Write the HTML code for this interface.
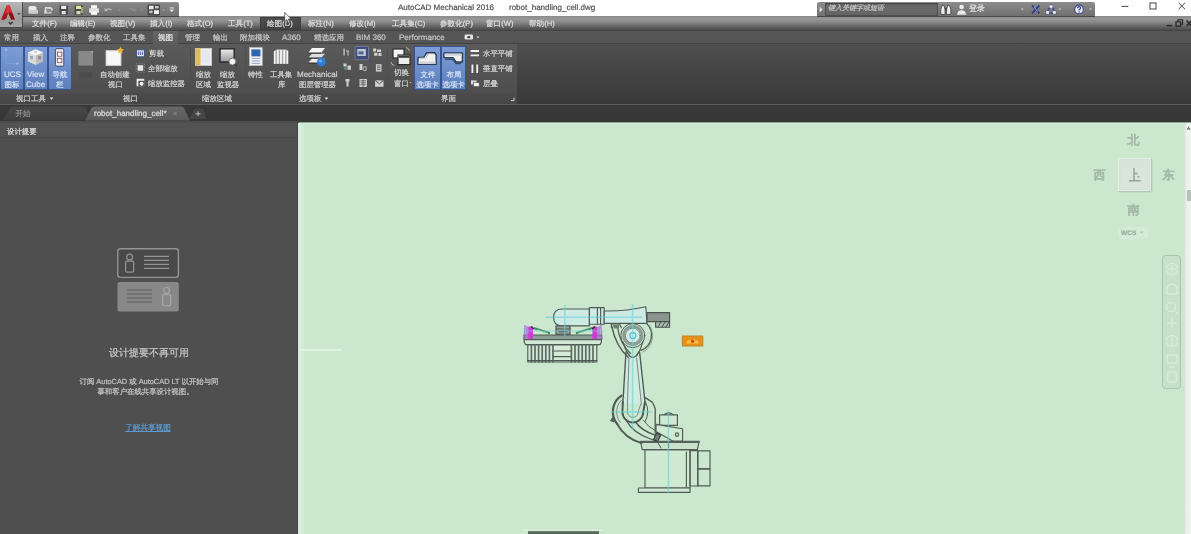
<!DOCTYPE html>
<html lang="zh">
<head>
<meta charset="utf-8">
<title>AutoCAD Mechanical 2016 - robot_handling_cell.dwg</title>
<style>
*{box-sizing:border-box;margin:0;padding:0}
html,body{width:1191px;height:534px;overflow:hidden;background:#cbe8ce}
body{font-family:"Liberation Sans",sans-serif;font-size:8px;color:#d6d6d6;position:relative;text-rendering:geometricPrecision}
.abs{position:absolute}
.t{position:absolute;white-space:nowrap;line-height:10px;filter:blur(.45px);opacity:.92;-webkit-text-stroke:.22px currentColor}
svg.abs{filter:blur(.4px)}
#robot{filter:blur(.55px)}
#titlebar{left:0;top:0;width:1191px;height:16px;background:#fefefe}
#appbtn{left:0;top:2px;width:23px;height:26px;background:linear-gradient(#b6b6b6,#a6a6a6 45%,#9c9c9c 75%,#a6a6a6);border-right:1.5px solid #4a4a4a;border-bottom:1px solid #4a4a4a}
#qat{left:23px;top:2px;width:156px;height:15px;background:linear-gradient(#878787,#7b7b7b 55%,#707070);border-radius:0 2px 0 0;border-top:1px solid #959595;border-bottom:1px solid #444}
#menubar{left:0;top:16px;width:1191px;height:15px;background:linear-gradient(#8a8a8a 0%,#979797 22%,#8b8b8b 40%,#767676 60%,#5e5e5e 82%,#4b4b4b 100%);border-bottom:1px solid #444}
#tabrow{left:0;top:31px;width:1191px;height:13px;background:linear-gradient(#565656,#555);border-bottom:1px solid #434343}
#ribbon{left:0;top:44px;width:1191px;height:49px;background:linear-gradient(#5a5a5a,#535353 55%,#4e4e4e)}
#ribbonR{left:517px;top:44px;width:674px;height:60px;background:linear-gradient(#4f4f4f,#454545 45%,#3d3d3d 80%,#3a3a3a)}
#ptitles{left:0;top:93px;width:517px;height:11px;background:linear-gradient(#4b4b4b,#464646)}
#filetabs{left:0;top:104px;width:1191px;height:18px;background:linear-gradient(#383838,#373737 75%,#343a35);border-top:1px solid #5c5c5c}
#leftpanel{left:0;top:121px;width:299px;height:413px;background:#4f4f4f}
#lphead{left:0;top:121px;width:298px;height:17px;background:linear-gradient(#545454,#505050);border-bottom:1px solid #4a4a4a}
#canvas{left:298px;top:122px;width:893px;height:412px;background:linear-gradient(#6f8273,#d3ead6 1.5px,#d0e9d4 3px,#cbe8ce 5px)}
</style>
</head>
<body>
<div class="abs" id="titlebar"></div>
<div class="abs" id="menubar"></div>
<div class="abs" id="appbtn"></div>
<div class="abs" id="qat"></div>
<div class="abs" id="tabrow"></div>
<div class="abs" id="ribbon"></div>
<div class="abs" id="ribbonR"></div>
<div class="abs" id="ptitles"></div>
<div class="abs" id="filetabs"></div>
<div class="abs" id="leftpanel"></div>
<div class="abs" id="lphead"></div>
<div class="abs" id="canvas"></div>

<!-- ===== title bar ===== -->
<div class="t" style="left:398px;top:2.5px;color:#484848;font-size:8px">AutoCAD Mechanical 2016</div>
<div class="t" style="left:509px;top:2.5px;color:#484848;font-size:8px">robot_handling_cell.dwg</div>

<!-- app button logo -->
<svg class="abs" style="left:0;top:0" width="23" height="28" viewBox="0 0 23 28">
  <path d="M6.8 5.4 L9.6 5.4 L14.8 19.4 L11.2 19.4 L8.4 13 L6.2 18.2 L2.8 20.2 L1.2 19.2 Z" fill="#b4161c"/>
  <path d="M6.8 5.4 L9.6 5.4 L11.6 11 L8.4 13 L5.2 13.4 Z" fill="#d4343a"/>
  <path d="M8.4 13 L11.2 19.4 L14.8 19.4 L12.8 14 Z" fill="#8a0f18"/>
  <path d="M2.8 20.2 L6.2 18.2 L7.2 15.6 L4.4 17.2 Z" fill="#9a1219"/>
  <path d="M8.8 22 l1.9 2.2 l1.9 -2.2" stroke="#2a2a2a" stroke-width="1.2" fill="none"/>
  <path d="M17.4 13.2 h3 l-1.5 1.8 z" fill="#2a2a2a"/>
</svg>

<!-- quick access toolbar icons -->
<svg class="abs" style="left:23px;top:2px" width="156" height="15" viewBox="0 0 156 15">
  <g fill="#e8e8e8">
    <path d="M7 4 h5 l1.5 1.5 v6 h-8 v-6.5 z"/>
    <rect x="6.3" y="8" width="8.8" height="3.6" fill="#cfcfcf"/>
    <path d="M22 5 h6 l2 2 -2 4.5 h-7 z" fill="#d8d8d8"/>
    <path d="M23 6.5 l5 .5 1 3 -5 .8z" fill="#8a8a8a"/>
    <rect x="36.5" y="3.2" width="8.5" height="9.6" rx="1" fill="#4a4a4a"/>
    <rect x="38.2" y="3.8" width="5" height="3.2" fill="#ededed"/>
    <rect x="38.6" y="9" width="4.2" height="3.2" fill="#dcdcdc"/>
    <rect x="51.5" y="3.2" width="8.5" height="9.6" rx="1" fill="#4a4a4a"/>
    <rect x="53" y="3.8" width="5" height="3.2" fill="#e6e2a0"/>
    <rect x="53.4" y="9" width="4.2" height="3.2" fill="#d8d8b8"/>
    <rect x="58.2" y="5" width="1.6" height="6" fill="#b9c46a"/>
    <rect x="66" y="6.2" width="10" height="4.6" rx="1" fill="#e2e2e2"/>
    <rect x="68" y="3.2" width="6" height="3.4" fill="#f6f6f6"/>
    <rect x="68" y="9.4" width="6" height="3.4" fill="#fafafa"/>
  </g>
  <path d="M82.5 8.6 q2.5 -3.2 6 -.6" stroke="#bdbdbd" stroke-width="1.3" fill="none"/>
  <path d="M81.4 6 l.4 3.6 3.2 -1.2z" fill="#bdbdbd"/>
  <path d="M95 7.4 h2.2 l-1.1 1.4z" fill="#a8a8a8"/>
  <g transform="translate(4.5 0)"><path d="M107 8.4 q-2.5 -3.2 -6 -.6" stroke="#8c8c8c" stroke-width="1.2" fill="none"/>
  <path d="M108.2 6 l-.4 3.6 -3.2 -1.2z" fill="#8c8c8c"/></g>
  <path d="M117.8 7.4 h2.2 l-1.1 1.4z" fill="#9a9a9a"/>
  <rect x="124.5" y="2.6" width="12.5" height="11" rx="1" fill="#4b4b4b"/>
  <rect x="126" y="3.8" width="4.6" height="3.4" fill="#e9e9e9"/>
  <rect x="131" y="8.2" width="5" height="3.8" fill="#f1f1f1"/>
  <rect x="126.2" y="8.6" width="3.4" height="2.6" fill="#bfbfbf"/>
  <rect x="132" y="4" width="3.6" height="2.4" fill="#c9c9c9"/>
  <path d="M139.4 7.4 h2.2 l-1.1 1.4z" fill="#b8b8b8"/>
  <rect x="146.6" y="5.4" width="4.4" height="1" fill="#dcdcdc"/>
  <path d="M146.4 7.6 h4.8 l-2.4 2.6z" fill="#dcdcdc"/>
</svg>

<!-- search / info center -->
<div class="abs" style="left:817px;top:2px;width:278px;height:15px;background:linear-gradient(#8c8c8c,#7c7c7c 55%,#707070);border-radius:2px 2px 0 0;border-bottom:1px solid #4a4a4a"></div>
<div class="abs" style="left:825px;top:2.5px;width:113px;height:13.5px;background:linear-gradient(#5e5e5e,#6a6a6a 30%,#646464);border:1px solid #4e4e4e;border-top-color:#444"></div>
<svg class="abs" style="left:817px;top:2px" width="8" height="15"><path d="M2.6 4.6 l3 3 -3 3z" fill="#e0e0e0"/></svg>
<div class="t" style="left:828px;top:4px;color:#c6c6c6;font-size:7px;font-style:italic">键入关键字或短语</div>
<svg class="abs" style="left:938px;top:2px" width="157" height="15" viewBox="0 0 157 15">
  <g fill="#ececec">
    <rect x="6.4" y="6" width="2.8" height="2.4" fill="#3a3a3a"/>
    <path d="M2.8 12.4 v-5 l1.2 -4 h2 l1 4 v5z" stroke="#3c3c3c" stroke-width=".8"/><path d="M8.6 12.4 v-5 l1 -4 h2 l1.2 4 v5z" stroke="#3c3c3c" stroke-width=".8"/>
    <circle cx="23.6" cy="5" r="2.3"/><path d="M19.4 12.2 q0 -4 4.2 -4 q4.2 0 4.2 4z"/>
    <rect x="19" y="11.6" width="9.4" height="1.2" fill="#d6d6d6"/>
  </g>
  <path d="M83 6.6 h2.6 l-1.3 1.6z" fill="#dcdcdc"/>
  <path d="M94 3.4 l7.4 8 M101.4 3.4 l-7.4 8" stroke="#2e3c8c" stroke-width="1.7"/>
  <path d="M96 5 l3.6 4.6" stroke="#9fb6e8" stroke-width=".9"/>
  <path d="M113 3 l4.6 8 h-9.2z" fill="none" stroke="#39468f" stroke-width="1.5"/>
  <circle cx="113" cy="4.6" r="1.7" fill="#dfe5f5"/><circle cx="109.6" cy="10.4" r="1.7" fill="#dfe5f5"/><circle cx="116.4" cy="10.4" r="1.7" fill="#dfe5f5"/>
  <path d="M120.6 6.6 h2.6 l-1.3 1.6z" fill="#d4d4d4"/>
  <circle cx="141" cy="7.4" r="4.4" fill="#eceef6" stroke="#4a5596" stroke-width="1.3"/>
  <path d="M139.6 6.2 q0 -1.6 1.5 -1.6 q1.5 0 1.5 1.4 q0 1 -1.5 1.6 v.8" stroke="#2f3a86" stroke-width="1.1" fill="none"/>
  <rect x="140.5" y="9.4" width="1.2" height="1.2" fill="#2f3a86"/>
  <path d="M151.2 6.6 h2.6 l-1.3 1.6z" fill="#d4d4d4"/>
</svg>
<div class="t" style="left:969px;top:4px;color:#e4e4e4;font-size:8px">登录</div>

<!-- window controls -->
<svg class="abs" style="left:1110px;top:0" width="81" height="30" viewBox="0 0 81 30">
  <path d="M11.4 6.4 h7" stroke="#4a4a4a" stroke-width="1"/>
  <rect x="40" y="3" width="6" height="6" fill="none" stroke="#444" stroke-width="1"/>
  <path d="M68.6 2.8 l6.4 6.4 M75 2.8 l-6.4 6.4" stroke="#444" stroke-width="1"/>
  <path d="M56.6 25.6 h5.6" stroke="#262626" stroke-width="1.4"/>
  <rect x="66" y="21.8" width="4.6" height="4.4" fill="none" stroke="#262626" stroke-width="1.2"/>
  <path d="M68 21.6 v-1.8 h4.6 v4.4 h-1.8" fill="none" stroke="#262626" stroke-width="1.1"/>
  <path d="M76.6 20.6 l5 5.4 M81.6 20.6 l-5 5.4" stroke="#262626" stroke-width="1.4"/>
</svg>

<!-- ===== menu bar ===== -->
<div class="abs" style="left:260px;top:17px;width:41px;height:13px;background:linear-gradient(#4f4f4f,#464646 60%,#414141);border:1px solid #3e3e3e"></div>
<div id="menus" style="font-size:7.6px;color:#e2e2e2">
<div class="t" style="left:32px;top:19px">文件(F)</div>
<div class="t" style="left:70px;top:19px">编辑(E)</div>
<div class="t" style="left:110px;top:19px">视图(V)</div>
<div class="t" style="left:150px;top:19px">插入(I)</div>
<div class="t" style="left:187px;top:19px">格式(O)</div>
<div class="t" style="left:228px;top:19px">工具(T)</div>
<div class="t" style="left:267px;top:19px">绘图(D)</div>
<div class="t" style="left:308px;top:19px">标注(N)</div>
<div class="t" style="left:349px;top:19px">修改(M)</div>
<div class="t" style="left:392px;top:19px">工具集(C)</div>
<div class="t" style="left:440px;top:19px">参数化(P)</div>
<div class="t" style="left:486px;top:19px">窗口(W)</div>
<div class="t" style="left:529px;top:19px">帮助(H)</div>
</div>
<!-- mouse cursor -->
<svg class="abs" style="left:283px;top:11px" width="10" height="14" viewBox="0 0 10 14"><path d="M1.7 1.4 v9.2 l2.2 -2 1.6 3.5 1.5 -.7 -1.6 -3.4 h2.9z" fill="#f6f6f6" stroke="#3a3a3a" stroke-width=".7"/></svg>

<!-- ===== ribbon tabs ===== -->
<div class="abs" style="left:153px;top:31px;width:25px;height:14px;background:linear-gradient(#666,#5b5b5b);border-radius:2px 2px 0 0"></div>
<div id="rtabs" style="font-size:7.5px;color:#cfcfcf">
<div class="t" style="left:4px;top:32.5px">常用</div>
<div class="t" style="left:33px;top:32.5px">插入</div>
<div class="t" style="left:60px;top:32.5px">注释</div>
<div class="t" style="left:88px;top:32.5px">参数化</div>
<div class="t" style="left:123px;top:32.5px">工具集</div>
<div class="t" style="left:158px;top:32.5px;color:#f2f2f2">视图</div>
<div class="t" style="left:185px;top:32.5px">管理</div>
<div class="t" style="left:213px;top:32.5px">输出</div>
<div class="t" style="left:240px;top:32.5px">附加模块</div>
<div class="t" style="left:282px;top:32.5px;font-size:8px">A360</div>
<div class="t" style="left:314px;top:32.5px">精选应用</div>
<div class="t" style="left:356px;top:32.5px;font-size:8px">BIM 360</div>
<div class="t" style="left:399px;top:32.5px;font-size:8px">Performance</div>
</div>
<svg class="abs" style="left:463px;top:33px" width="20" height="9" viewBox="0 0 20 9"><rect x="1.6" y="1.6" width="8.4" height="5" rx="1.4" fill="#e4e4e4"/><rect x="4.4" y="3" width="2.8" height="2.2" fill="#4a4a4a"/><path d="M13.4 3.4 h3 l-1.5 1.8z" fill="#d4d4d4"/></svg>

<!-- ===== ribbon panel: group 1 (视口工具) ===== -->
<div class="abs" style="left:0;top:46px;width:24px;height:44px;background:linear-gradient(#7c9dd6,#6c8fcb 50%,#5c7fbd);border:1px solid #37548f"></div>
<div class="abs" style="left:24px;top:46px;width:24px;height:44px;background:linear-gradient(#7c9dd6,#6c8fcb 50%,#5c7fbd);border:1px solid #37548f"></div>
<div class="abs" style="left:48px;top:46px;width:24px;height:44px;background:linear-gradient(#7c9dd6,#6c8fcb 50%,#5c7fbd);border:1px solid #37548f"></div>
<svg class="abs" style="left:0;top:46px" width="72" height="24" viewBox="0 0 72 24">
  <!-- UCS icon -->
  <path d="M6 3.6 v14 h11" stroke="#7f9fd4" stroke-width="1" fill="none"/>
  <path d="M6 2 l-1.4 2.4 h2.8z M19 17.6 l-2.4 -1.4 v2.8z" fill="#a9c0e6"/>
  <!-- view cube -->
  <path d="M28 6.4 l7.6 -3 7.4 3 v8.8 l-7.4 3.6 -7.6 -3.6z" fill="#e8e8e8"/>
  <path d="M28 6.4 l7.6 3 7.4 -3 -7.4 -3z" fill="#fafafa"/>
  <path d="M35.6 9.4 v9.4 l7.4 -3.6 v-8.8z" fill="#bdbdbd"/>
  <path d="M28 6.4 l7.6 3 v9.4 l-7.6 -3.6z" fill="#dadada"/>
  <rect x="30" y="10" width="3" height="3.4" fill="#9aa7bd"/><rect x="38" y="10" width="3" height="3.4" fill="#8b8f98"/><rect x="34" y="5" width="3" height="2" fill="#c8cede"/>
  <!-- nav bar -->
  <rect x="55.4" y="2.6" width="8.4" height="17.6" rx="1.6" fill="#e9e9e9" stroke="#3d4d6d" stroke-width="1"/>
  <rect x="57.4" y="6.2" width="4.4" height="4" fill="#fff" stroke="#8b5a6a" stroke-width=".9"/>
  <rect x="57.4" y="12.4" width="4.4" height="4" fill="#fff" stroke="#8b5a6a" stroke-width=".9"/>
</svg>
<div id="g1t" style="font-size:7.4px;color:#dde6f6">
<div class="t" style="left:4px;top:70px;font-size:8px">UCS</div>
<div class="t" style="left:4.5px;top:80px">图标</div>
<div class="t" style="left:27px;top:70px;font-size:8px">View</div>
<div class="t" style="left:26px;top:80px;font-size:8px">Cube</div>
<div class="t" style="left:52.5px;top:70px">导航</div>
<div class="t" style="left:56px;top:80px">栏</div>
</div>

<!-- group 2 (视口) -->
<svg class="abs" style="left:74px;top:44px" width="116" height="49" viewBox="0 0 116 49">
  <rect x="4.4" y="7" width="14.6" height="14.6" fill="#888888"/>
  <path d="M16 7 h3 v3z" fill="#a2a2a2"/>
  <rect x="5" y="28" width="13" height="6" fill="#4a4a4a" opacity=".6"/>
  <rect x="32" y="6.6" width="15" height="15" fill="#ececec" stroke="#d2d2d2" stroke-width=".8"/>
  <rect x="33" y="7.6" width="13" height="13" fill="#f6f6f6"/>
  <path d="M46.4 2.6 l1.1 2.3 2.5 .4 -1.8 1.8 .4 2.5 -2.2 -1.2 -2.2 1.2 .4 -2.5 -1.8 -1.8 2.5 -.4z" fill="#f2b632"/>
  <!-- small icons -->
  <rect x="62.4" y="5.8" width="8" height="7" fill="#e6e6e6" stroke="#3a4f86" stroke-width="1"/>
  <path d="M64.4 7.6 v3.4 M66.4 7.6 v3.4 M68.4 7.6 v3.4" stroke="#39519a" stroke-width=".9"/>
  <rect x="62.2" y="19.8" width="8.4" height="8.4" fill="none" stroke="#9a9a9a" stroke-width=".7" stroke-dasharray="1.4 1.4"/>
  <rect x="63.6" y="21.2" width="5.6" height="5.6" fill="#e6e6e6"/>
  <rect x="62.6" y="34.8" width="7.6" height="7.4" fill="#ededed"/>
  <rect x="64.4" y="36.8" width="5.8" height="5.4" fill="#4c4c4c"/>
  <circle cx="67.6" cy="39.8" r="2" fill="#f4f4f4"/>
</svg>
<div id="g2t" style="font-size:7.4px;color:#dcdcdc">
<div class="t" style="left:100px;top:70px">自动创建</div>
<div class="t" style="left:108px;top:80px">视口</div>
<div class="t" style="left:149px;top:48.5px">剪裁</div>
<div class="t" style="left:148px;top:63.5px">全部缩放</div>
<div class="t" style="left:148px;top:78.5px">缩放监控器</div>
</div>

<!-- group 3 (缩放区域) -->
<div class="abs" style="left:190px;top:47px;width:1px;height:44px;background:#4d4d4d"></div>
<svg class="abs" style="left:192px;top:44px" width="52" height="26" viewBox="0 0 52 26">
  <rect x="3.6" y="4.4" width="16" height="17" fill="#f1f1f1" stroke="#cfcfcf" stroke-width=".8"/>
  <rect x="3.6" y="4.4" width="5" height="17" fill="#e2b95c"/>
  <rect x="9.4" y="6" width="8.6" height="13.6" fill="#e3e8f1"/>
  <defs><linearGradient id="mon" x1="0" y1="0" x2="0" y2="1"><stop offset="0" stop-color="#e8e8ea"/><stop offset="1" stop-color="#9c9ca4"/></linearGradient></defs>
  <rect x="27.6" y="4.4" width="15" height="14" fill="#3a3a3a" stroke="#2c2c2c" stroke-width=".8"/>
  <rect x="28.8" y="5.6" width="12.6" height="11.6" fill="url(#mon)"/>
  <circle cx="40.4" cy="17.6" r="3.4" fill="#f4f4f4" stroke="#7a7a7a" stroke-width="1"/>
  <path d="M42.8 20 l2.4 2.4" stroke="#3a3a3a" stroke-width="1.4"/>
</svg>
<div id="g3t" style="font-size:7.4px;color:#dcdcdc">
<div class="t" style="left:196px;top:70px">缩放</div>
<div class="t" style="left:196px;top:80px">区域</div>
<div class="t" style="left:220px;top:70px">缩放</div>
<div class="t" style="left:217px;top:80px">监视器</div>
</div>

<!-- group 4 (选项板) -->
<div class="abs" style="left:245px;top:47px;width:1px;height:44px;background:#505050"></div>
<svg class="abs" style="left:246px;top:44px" width="142" height="49" viewBox="0 0 142 49">
  <!-- properties -->
  <rect x="3.6" y="3.6" width="12.6" height="18" fill="#f3f3f3" stroke="#b7c0d0" stroke-width=".8"/>
  <rect x="5.4" y="5.4" width="9" height="7" fill="#2f64b0"/>
  <path d="M5.6 14.6 h8.6 M5.6 17 h8.6 M5.6 19.4 h8.6" stroke="#8aa0c0" stroke-width=".9"/>
  <!-- tool library -->
  <path d="M28 7.4 l2.6 -2 h9.6 l2 1.4 v13 h-14.2z" fill="#d4d4d4"/>
  <path d="M28.6 7 v13 M31.8 6.2 v13.6 M35 6.2 v13.6 M38.2 6.2 v13.6 M41.4 7 v12.8" stroke="#f6f6f6" stroke-width="1.5"/>
  <path d="M30.2 6.4 v13.4 M33.4 6.4 v13.4 M36.6 6.4 v13.4 M39.8 6.4 v13.4" stroke="#8f8f8f" stroke-width=".8"/>
  <!-- mechanical layer manager -->
  <path d="M62 9 l4 -5 h13 l-4 5z" fill="#f6f6f6"/>
  <path d="M62 14 l4 -4.2 h13 l-4 4.2z" fill="#dddddd"/>
  <path d="M62 19 l4 -4.2 h13 l-4 4.2z" fill="#f0f0f0"/>
  <path d="M62 9 h13 M62 14 h13 M62 19 h13" stroke="#2a2a2a" stroke-width="1.1"/>
  <circle cx="75.4" cy="18" r="4.4" fill="#2b7fd6"/>
  <circle cx="74.6" cy="17" r="1.6" fill="#6db1f0"/>
  <!-- small icon grid -->
  <g fill="#e2e2e2" transform="translate(-1.5 -.6)" opacity=".88">
    <path d="M99 5 h1.2 v7 h-1.2z M101.6 7 h3 v1 h-3z M103 8.4 h1 v3.6 h-1z" />
    <rect x="110.6" y="3" width="13.4" height="13.4" rx="1" fill="#3d4c7c" stroke="#7486b8" stroke-width=".9"/>
    <rect x="112.8" y="5.6" width="8.6" height="7" fill="#cdd7ea"/>
    <rect x="114" y="8" width="5" height="3" fill="#4a67a5"/>
    <path d="M128.6 5 h3 v3 h-3z M132.6 6 h4 v2.6 h-4z M129.6 9.4 h3.4 v3 h-3.4z M134 9.6 h3 v3 h-3z"/>
    <path d="M99 20 h3 v3 h-3z M103 22 h3.4 v4.4 h-3.4z" />
    <rect x="100" y="24" width="2" height="2.4" fill="#63b47a"/>
    <path d="M115 20.6 h3 v6 h-3z M119 23 h3 v4.4 h-3z" />
    <rect x="119.6" y="24" width="1.6" height="2.6" fill="#4a4a4a"/>
    <path d="M131.4 20.8 h5.6 v7.4 h-5.6z"/>
    <path d="M132.4 22.6 h3.6 M132.4 24.4 h3.6 M132.4 26.2 h3.6" stroke="#555" stroke-width=".8"/>
    <path d="M101 35.6 h4 v2.4 h-1 v5 h-2 v-5 h-1z"/>
    <path d="M115 35.6 h7.4 v8 h-7.4z"/>
    <path d="M116 37.4 h5.4 M116 39.4 h5.4 M116 41.4 h5.4 M118.6 36 v7.6" stroke="#555" stroke-width=".8"/>
    <path d="M130.6 37 h8.4 v6.4 h-8.4z"/>
    <path d="M130.6 37 l4.2 3.4 4.2 -3.4" stroke="#4a4a4a" stroke-width=".9" fill="none"/>
  </g>
</svg>
<div id="g4t" style="font-size:7.4px;color:#dcdcdc">
<div class="t" style="left:248px;top:70px">特性</div>
<div class="t" style="left:270px;top:70px">工具集</div>
<div class="t" style="left:278px;top:80px">库</div>
<div class="t" style="left:297px;top:70px;font-size:8px">Mechanical</div>
<div class="t" style="left:299px;top:80px">图层管理器</div>
</div>

<!-- group 5 (界面) -->
<div class="abs" style="left:387px;top:47px;width:1px;height:44px;background:#505050"></div>
<div class="abs" style="left:414px;top:46px;width:27px;height:44px;background:linear-gradient(#7c9dd6,#6c8fcb 50%,#5c7fbd);border:1px solid #37548f"></div>
<div class="abs" style="left:441px;top:46px;width:25px;height:44px;background:linear-gradient(#7c9dd6,#6c8fcb 50%,#5c7fbd);border:1px solid #37548f"></div>
<svg class="abs" style="left:388px;top:44px" width="128" height="49" viewBox="0 0 128 49">
  <rect x="5" y="5" width="11" height="9" fill="#f4f4f4" stroke="#2d2d2d" stroke-width="1.2"/>
  <rect x="10" y="11" width="12" height="9.6" fill="#ededed" stroke="#2d2d2d" stroke-width="1.2"/>
  <rect x="10.6" y="11.6" width="10.8" height="2.2" fill="#3a3a3a"/>
  <path d="M18 3.6 q3 .4 3.4 3.4 M6.4 21.4 q-3 -.4 -3.4 -3.4" stroke="#cfcfcf" stroke-width=".8" fill="none"/>
  <path d="M21.4 38 h2 l-1 1.2z" fill="#bdbdbd"/>
  <!-- file tab icon -->
  <path d="M30 20.4 v-7 h5.6 l3 -4.6 h8 l1.6 2 v9.6z" fill="#f0f0f0" stroke="#2c3a58" stroke-width="1.4" stroke-linejoin="round"/>
  <path d="M30.6 19.8 h17 v-2.4 h-17z" fill="#cfd3da"/>
  <path d="M40 10 l-2.6 4 h-6" stroke="#9aa6bd" stroke-width="1" fill="none"/>
  <!-- layout tab icon -->
  <path d="M56 9 h18.4 v9 h-6.4 l-3 -4.4 h-9z" fill="#f0f0f0" stroke="#2c3a58" stroke-width="1.4" stroke-linejoin="round"/>
  <path d="M56.6 9.6 h17.2 v2.2 h-17.2z" fill="#cfd3da"/>
  <path d="M57 15.4 h8 l3 4.2 h5" stroke="#3a4663" stroke-width="1.2" fill="none"/>
  <!-- small -->
  <path d="M82.6 7 h8.4 M82.6 11.4 h8.4" stroke="#f2f2f2" stroke-width="1.8"/>
  <path d="M84.4 20.6 v8.4 M89.2 20.6 v8.4" stroke="#f2f2f2" stroke-width="1.8"/>
  <rect x="83" y="36.4" width="5.6" height="4" fill="#dcdcdc"/>
  <rect x="85.6" y="38.6" width="5.6" height="4" fill="#f4f4f4" stroke="#4a4a4a" stroke-width=".6"/>
</svg>
<div id="g5t" style="font-size:7.4px;color:#dcdcdc">
<div class="t" style="left:394px;top:68px">切换</div>
<div class="t" style="left:394px;top:79px">窗口</div>
<div class="t" style="left:420.5px;top:70px;color:#dde6f6">文件</div>
<div class="t" style="left:416.5px;top:80px;color:#dde6f6">选项卡</div>
<div class="t" style="left:446.5px;top:70px;color:#dde6f6">布局</div>
<div class="t" style="left:442.5px;top:80px;color:#dde6f6">选项卡</div>
<div class="t" style="left:483px;top:48.5px">水平平铺</div>
<div class="t" style="left:483px;top:63.5px">垂直平铺</div>
<div class="t" style="left:483px;top:78.5px">层叠</div>
</div>

<!-- panel titles -->
<div id="ptt" style="font-size:7.5px;color:#d8d8d8">
<div class="t" style="left:16px;top:94px">视口工具</div>
<div class="t" style="left:123px;top:94px">视口</div>
<div class="t" style="left:202px;top:94px">缩放区域</div>
<div class="t" style="left:299px;top:94px">选项板</div>
<div class="t" style="left:441px;top:94px">界面</div>
</div>
<svg class="abs" style="left:0;top:93px" width="520" height="11" viewBox="0 0 520 11">
  <path d="M49.6 4.4 h4 l-2 2.4z M324.4 4.4 h4 l-2 2.4z" fill="#e2e2e2"/>
  <path d="M511 7.6 h3 v-3" stroke="#cfcfcf" stroke-width="1" fill="none"/>
</svg>

<!-- ===== file tabs ===== -->
<svg class="abs" style="left:0;top:105px" width="220" height="17" viewBox="0 0 220 17">
  <defs>
    <linearGradient id="ft1" x1="0" y1="0" x2="0" y2="1"><stop offset="0" stop-color="#484848"/><stop offset="1" stop-color="#3e3e3e"/></linearGradient>
    <linearGradient id="ft2" x1="0" y1="0" x2="0" y2="1"><stop offset="0" stop-color="#686868"/><stop offset="1" stop-color="#595959"/></linearGradient>
  </defs>
  <path d="M3 15.4 L10 3 Q11 1.4 13 1.4 H83 Q85 1.4 86 3 L91 15.4z" fill="url(#ft1)"/>
  <path d="M85 15.4 L91.4 3 Q92.4 1.4 94.4 1.4 H181 Q183 1.4 184 3 L190 15.4z" fill="url(#ft2)"/>
  <path d="M189.6 14 L193.6 5 Q194.4 3.6 196 3.6 H201.6 Q203.2 3.6 203.8 5 L206.6 14z" fill="#464646"/>
  <path d="M195.6 8.8 h5 M198.1 6.4 v4.8" stroke="#bdbdbd" stroke-width="1"/>
  <path d="M173.6 6.8 l3.2 3.4 M176.8 6.8 l-3.2 3.4" stroke="#8c8c8c" stroke-width=".9"/>
</svg>
<div class="t" style="left:15.5px;top:108.5px;color:#959595;font-size:7.6px">开始</div>
<div class="t" style="left:94px;top:108.5px;color:#e6e6e6;font-size:8px">robot_handling_cell*</div>
<div class="abs" style="left:0;top:121px;width:299px;height:2px;background:#4d4d4d"></div>

<!-- ===== left panel ===== -->
<div class="t" style="left:7px;top:127px;color:#e8e8e8;font-size:7.4px">设计提要</div>
<svg class="abs" style="left:112px;top:244px" width="74" height="72" viewBox="0 0 74 72">
  <rect x="5.8" y="4.8" width="60.6" height="28.6" rx="2.6" fill="#494949" stroke="#949494" stroke-width="1.4"/>
  <circle cx="17.6" cy="13" r="2.9" fill="none" stroke="#949494" stroke-width="1.2"/>
  <rect x="13.6" y="17.2" width="8" height="11" rx="1.2" fill="none" stroke="#949494" stroke-width="1.2"/>
  <path d="M32 12.4 h25 M32 16.4 h25 M32 20.4 h25 M32 24.4 h25" stroke="#949494" stroke-width="1.2"/>
  <rect x="5.4" y="38" width="61.4" height="29.6" rx="2.6" fill="#888888"/>
  <circle cx="54.6" cy="46.4" r="2.9" fill="none" stroke="#a6a6a6" stroke-width="1.2"/>
  <rect x="50.6" y="50.6" width="8" height="11" rx="1.2" fill="none" stroke="#a6a6a6" stroke-width="1.2"/>
  <path d="M15 46 h25 M15 50 h25 M15 54 h25 M15 58 h25" stroke="#5e5e5e" stroke-width="1.2"/>
</svg>
<div class="t" style="left:0;width:298px;text-align:center;top:348px;line-height:12px;color:#d2d2d2;font-size:10px">设计提要不再可用</div>
<div class="t" style="left:0;width:298px;text-align:center;top:377px;color:#cccccc;font-size:7.4px">订阅 AutoCAD 或 AutoCAD LT 以开始与同</div>
<div class="t" style="left:0;width:291px;text-align:center;top:386.5px;color:#cccccc;font-size:7.4px">事和客户在线共享设计视图。</div>
<div class="t" style="left:0;width:296px;text-align:center;top:423px;color:#5d9fd8;font-size:7.6px;text-decoration:underline">了解共享视图</div>

<!-- ===== canvas ===== -->
<div class="abs" style="left:297px;top:122px;width:1px;height:412px;background:#3f4741"></div>
<div class="abs" style="left:298px;top:123px;width:3px;height:411px;background:#d9eedc"></div>
<div class="abs" style="left:301px;top:124px;width:2.5px;height:410px;background:#d4ecd8"></div>
<div class="abs" style="left:300px;top:349px;width:42px;height:2px;background:#def1e1;filter:blur(.5px)"></div>
<div class="abs" style="left:522px;top:529px;width:80px;height:2px;background:#d6edd9;filter:blur(.6px)"></div>
<div class="abs" style="left:527.5px;top:531.2px;width:71px;height:3px;background:#586a5d;border-top:1px solid #6f8274"></div>
<div class="abs" style="left:1184px;top:123px;width:7px;height:411px;background:linear-gradient(90deg,#cfe2d3,#e6f0e8 30%,#edf3ee 60%,#ecf1ec)"></div>
<div class="abs" style="left:1187px;top:190px;width:4px;height:11px;background:#b7c2ba"></div>
<svg class="abs" style="left:1186px;top:125px" width="5" height="6"><path d="M.6 4.4 l2 -2.8 2 2.8z" fill="#6a746d"/></svg>

<!-- ===== robot drawing ===== -->
<svg class="abs" id="robot" style="left:500px;top:290px" width="240" height="244" viewBox="500 290 240 244">
  <g fill="none" stroke="#505b55" stroke-width="1.15" stroke-linejoin="round" stroke-linecap="round">
    <!-- base -->
    <rect x="645" y="449.6" width="45" height="38.4" fill="#cfe9d2"/>
    <path d="M638.4 488 h51.6 v4.4 h-51.6z" fill="#cfe9d2"/>
    <path d="M640.6 441.6 h58.4 l-1.6 8 h-55.2z" fill="#c9e2cc"/>
    <path d="M640.6 441.8 h58.4" stroke-width="2.2" stroke="#56625b"/>
    <rect x="690" y="450.6" width="7.8" height="35.4"/>
    <rect x="697.8" y="450.8" width="12.2" height="18"/>
    <rect x="697.8" y="468.8" width="12.2" height="17"/>
    <path d="M686.4 452 v35"/>
    <!-- motor on base -->
    <rect x="659.6" y="414.8" width="17.8" height="10.6" fill="#cfe9d2"/>
    <path d="M664 414.6 q4.6 -3.4 9.2 0"/>
    <path d="M656 424.4 L682.6 428.8 V441 H672.6 L656 431.6z" fill="#cfe9d2"/>
    <circle cx="677" cy="434.6" r="1.7"/>
    <!-- lower arm -->
    <path d="M626 357 L623 404 H645.6 L639.6 357z" fill="#d0ebe0" stroke="none"/>
    <path d="M626 352 L622.8 404 M639.6 352 L645.2 404" stroke-width="1.4"/>
    <path d="M629 358 L627.4 404 M636.6 358 L641.4 404" stroke="#6d7a73" stroke-width=".9"/>
    <!-- elbow -->
    <path d="M621.4 395.6 A19.5 19.5 0 0 0 617.2 424" stroke-width="2.2"/>
    <path d="M624 398 A16.6 16.6 0 0 0 620.4 422.6" stroke="#74827b" stroke-width=".9"/>
    <path d="M622.8 402 L622.4 412 A10.4 10.4 0 0 0 643.2 412 L645 402" stroke-width="2"/>
    <path d="M627.6 404 L627.4 412 A5.4 5.4 0 0 0 638.2 412 L640.8 404" stroke="#74827b" stroke-width=".9"/>
    <path d="M645.2 397.6 L652.6 402.4 L655.2 408.4 V433" stroke-width="1.3"/>
    <path d="M645.4 402 Q650.6 412 645 421.6" stroke-width="1"/>
    <path d="M612.8 417.6 l-2 3 3 1.2z" fill="#7d8a83"/>
    <!-- swing link to base -->
    <path d="M617.2 424 Q625 438.6 641.6 443.2" stroke-width="1.8"/>
    <path d="M626.4 420.6 Q633 432.6 650 438.8 L657 441.4" stroke-width="1.2"/>
    <path d="M635.6 422 Q641 430.4 655.6 435.4" stroke-width="1.4"/>
    <path d="M643.6 420.6 Q648 427 655.2 430.6" stroke-width="1"/>
    <path d="M656.6 432.8 l4.2 2.4 -3.4 6.6 -3.8 -2.4z" fill="#6f7c75" stroke="#39423d"/>
    <path d="M657 441 l4 7 M668.6 441.6 v6" stroke-width="1"/>
    <!-- shoulder -->
    <path d="M646.8 323.6 A16.4 16.4 0 0 1 641 350.4" stroke-width="1.3"/>
    <path d="M649 325 A18 18 0 0 1 643 352" stroke="#7c8a83" stroke-width=".8"/>
    <circle cx="632.8" cy="335.6" r="9.2" stroke="#8c9c94" stroke-width="2.8"/>
    <circle cx="632.8" cy="335.6" r="7.4" fill="#d6ede4" stroke="#66736c" stroke-width=".8"/>
    <circle cx="632.8" cy="335.6" r="12" stroke-width="1"/>
    <circle cx="632.8" cy="335.6" r="3" stroke="#4fbfc8" stroke-width="1.2" fill="#c9efe9"/>
    <path d="M622.6 341.6 Q624.6 349 629.6 356 M643 341.6 Q641 349 636.6 356"/>
    <path d="M627 352 Q632.6 363 638.6 352" stroke-width="1.2"/>
    <path d="M611.8 326.4 Q615.6 346 628.4 357.4" stroke-width="1.4"/>
    <path d="M617.6 327.4 Q619.6 343 630.6 353.6" stroke-width="1.2"/>
    <path d="M611.6 324 h8 l1.6 3.6 M611.4 323.6 v4" stroke-width="1.2"/>
    <path d="M612.6 325 h6.4 v3.4 h-5z" fill="#6f7d76" stroke="none"/>
    <!-- upper arm motor -->
    <path d="M589.4 309 H562 Q553.6 309 553.6 317.4 Q553.6 325.8 562 325.8 H589.4z" fill="#cdeae4"/>
    <path d="M589.4 307.6 h14.8 v16.6 h-14.8z" fill="#cdeae4"/>
    <path d="M597.4 307.6 v16.6 M600.6 307.6 v16.6"/>
    <path d="M604.2 311 Q626 311.4 645.8 306.8 L647 323.4 H604.2z" fill="#cdeae4"/>
    <path d="M647 312.6 h22.6 v9 h-22.6z" fill="#8a958f" stroke="#4a544e"/>
    <path d="M655.6 321.6 h14 v5.6 h-14z" fill="#aab8b0" stroke="#4a544e"/>
    <path d="M658 327 l3 -5 M662 327 l3 -5 M666 327 l3 -5" stroke="#3e4742" stroke-width=".9"/>
    <path d="M556 325.8 h14 v8.6 h-14z" fill="#93a29a"/>
    <path d="M556 329 h14 M559 331.6 h8"/>
    <!-- gripper -->
    <path d="M524 335 h77.6 v4.6 h-77.6z" fill="#8d9c94"/>
    <path d="M524.2 339.6 h77.2 v2.6 l-1.4 2.4 h-74.4 l-1.4 -2.4z" fill="#d2ead5"/>
    <rect x="527.8" y="345" width="69" height="17" fill="#d4ebd6"/>
    <path d="M531.4 345 v17 M535 345 v17 M538.6 345 v17 M542.2 345 v17 M545.8 345 v17 M549.4 345 v17 M553 345 v17 M571.4 345 v17 M575 345 v17 M578.6 345 v17 M582.2 345 v17 M585.8 345 v17 M589.4 345 v17 M593 345 v17" stroke-width="1.7" stroke="#5f6c65"/>
    <path d="M553 351 h18.4 M553 356.6 h18.4"/>
    <path d="M527.8 360.6 h69"/>
  </g>
  <!-- coloured parts -->
  <path d="M525.4 325.6 l6.4 3 v9 l-6.4 1z" fill="#b46ad6" opacity=".75"/>
  <path d="M528.4 326.6 h4.6 v12.6 h-4.6z" fill="#d23ad8"/>
  <path d="M600.6 325.6 l-6.4 3 v9 l6.4 1z" fill="#b46ad6" opacity=".75"/>
  <path d="M592.4 326.6 h4.6 v12.6 h-4.6z" fill="#d23ad8"/>
  <path d="M525 325 l-1 14 M601 325 l1 14" stroke="#8d74d8" stroke-width=".9" fill="none"/>
  <path d="M533.6 328 L550 333.4 M592.4 328 L576 333.4" stroke="#3f8f6a" stroke-width="2.2" fill="none"/>
  <path d="M537 330 L548 333.6 M589 330 L578 333.6" stroke="#cfe9d6" stroke-width=".8" fill="none"/>
  <path d="M531 326.6 l3 2.4 M595 326.6 l-3 2.4" stroke="#2d3a34" stroke-width="1.6"/>
  <!-- centre lines -->
  <g stroke="#62d2dc" stroke-width="1.5" fill="none" opacity=".58">
    <path d="M545 317.2 H642"/>
    <path d="M564.8 305 V336"/>
    <path d="M632.6 304 V430"/>
    <path d="M611 412 H652"/>
    <path d="M668.4 410 V493"/>
    <path d="M524 331 H604" opacity=".6"/>
  </g>
  <!-- orange tag -->
  <rect x="682.4" y="336" width="20.4" height="10" fill="#e8901a" stroke="#b9862a" stroke-width="1"/>
  <path d="M686 343.6 q2 -5.6 5 -3 q2.4 -3.6 4.4 0 q2.6 -1.6 3.4 3z" fill="#f4c23a"/>
  <circle cx="692.6" cy="341.2" r="1.7" fill="#e2402a"/>
</svg>

<!-- ===== view cube / compass ===== -->
<div class="abs" style="left:1118px;top:158px;width:33px;height:33px;background:#d9e4da;border:1.5px solid #e2ede3;box-shadow:1px 1px 1.5px #a9bdad, inset 0 0 2px #c7d6ca"></div>
<svg class="abs" style="left:1124px;top:164px" width="22" height="22" viewBox="0 0 22 22"><path d="M10 4 v12.6 M10 9.6 h3.6 M5 16.8 h11.6" stroke="#98a49b" stroke-width="1.5" fill="none"/><rect x="13.6" y="12" width="1.6" height="1.6" fill="#98a49b"/></svg>
<div id="cmp" style="font-size:12px;font-weight:bold;color:#a3b6a8">
<div class="t" style="left:1127.5px;top:133px;line-height:14px">北</div>
<div class="t" style="left:1093.5px;top:168px;line-height:14px">西</div>
<div class="t" style="left:1162.5px;top:168px;line-height:14px">东</div>
<div class="t" style="left:1127.5px;top:203px;line-height:14px">南</div>
</div>
<div class="abs" style="left:1118px;top:227px;width:30px;height:12px;background:#d3ead7;border-radius:3px;filter:blur(.6px)"></div>
<div class="t" style="left:1121px;top:228.5px;font-size:6.6px;font-weight:bold;color:#93a698">WCS</div>
<svg class="abs" style="left:1138px;top:230px" width="8" height="6"><path d="M1.6 1.6 h4 l-2 2.4z" fill="#b4c6b8"/></svg>

<!-- navigation bar -->
<div class="abs" style="left:1162px;top:255px;width:19px;height:134px;background:#c6e0ca;border:1.4px solid #abc4b0;border-radius:3.5px;filter:blur(.5px)"></div>
<svg class="abs" style="left:1161px;top:255px" width="22" height="134" viewBox="0 0 22 134">
  <g fill="none" stroke="#d8ebda" stroke-width="1.4">
    <circle cx="11" cy="14" r="5.6"/><path d="M11 10 v8 M7 14 h8"/>
    <path d="M6 32 q5 -6 10 0 v7 h-10z"/>
    <circle cx="10" cy="52" r="4.6"/><path d="M13.4 55.6 l3.4 3.6"/>
    <path d="M6 68 h10 M11 63 v10" />
    <circle cx="11" cy="86" r="5.6"/><path d="M11 80.4 v11.2"/>
    <rect x="6" y="100" width="10" height="8" rx="1"/><path d="M8 112 h6"/>
    <rect x="6.6" y="117" width="8.8" height="10" rx="1"/>
  </g>
</svg>
</body>
</html>
